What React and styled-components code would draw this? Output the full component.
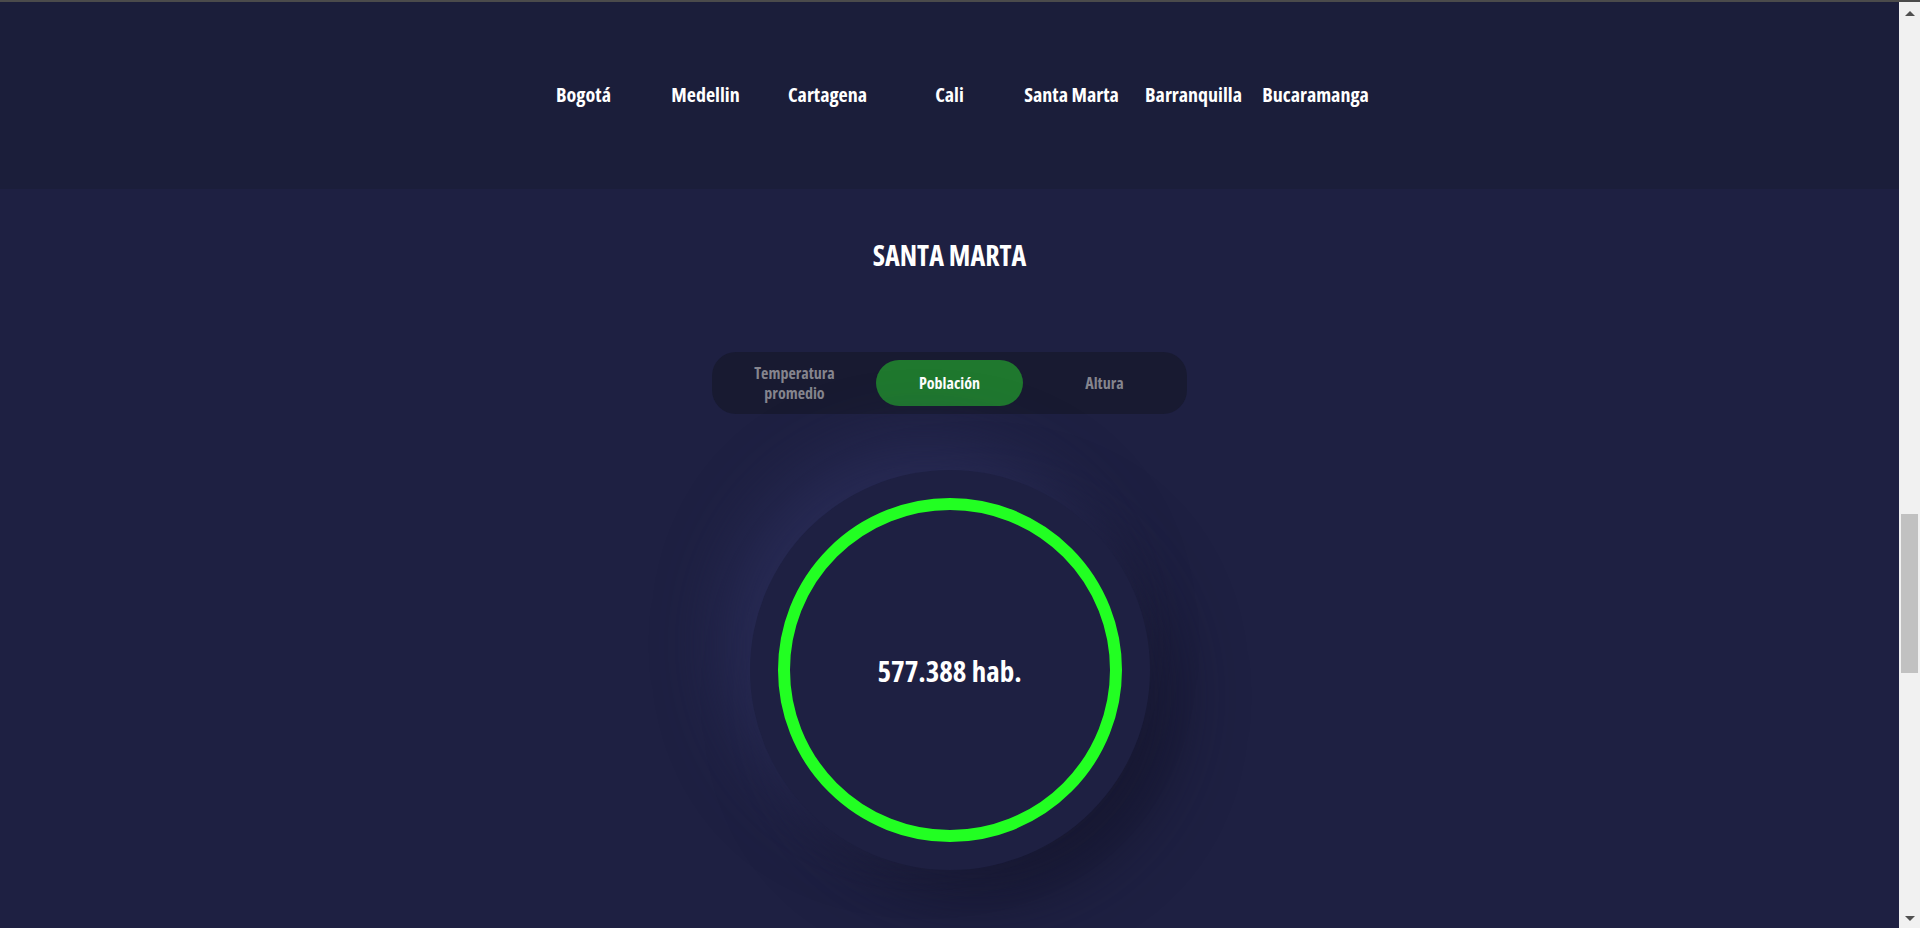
import React, { useState } from 'react'
import styled, { createGlobalStyle } from 'styled-components'

const colors = {
  header: '#1b1e3a',
  section: '#1e2042',
  tabs: '#181a31',
  active: '#1f782e',
  ring: '#22ff22',
  muted: '#85858e',
  white: '#ffffff',
  track: '#f1f1f1',
  thumb: '#c1c1c1',
  arrow: '#505050',
}

const GlobalStyle = createGlobalStyle`
  html, body {
    margin: 0;
    padding: 0;
    height: 100%;
    overflow: hidden;
  }
  body {
    border-top: 2px solid #4b4b4b;
    box-sizing: border-box;
    background: ${colors.section};
    font-family: "Open Sans", "Liberation Sans", sans-serif;
    font-stretch: 75%;
    font-weight: 700;
  }
`

const cities = [
  { name: 'Bogotá', temperatura: '14 °C', poblacion: '7.181.469 hab.', altura: '2.640 m' },
  { name: 'Medellin', temperatura: '22 °C', poblacion: '2.427.129 hab.', altura: '1.495 m' },
  { name: 'Cartagena', temperatura: '28 °C', poblacion: '1.028.736 hab.', altura: '2 m' },
  { name: 'Cali', temperatura: '25 °C', poblacion: '2.227.642 hab.', altura: '1.018 m' },
  { name: 'Santa Marta', temperatura: '28 °C', poblacion: '577.388 hab.', altura: '6 m' },
  { name: 'Barranquilla', temperatura: '28 °C', poblacion: '1.274.250 hab.', altura: '18 m' },
  { name: 'Bucaramanga', temperatura: '23 °C', poblacion: '581.130 hab.', altura: '959 m' },
]

const tabs = [
  { key: 'temperatura', label: 'Temperatura promedio' },
  { key: 'poblacion', label: 'Población' },
  { key: 'altura', label: 'Altura' },
]

const Page = styled.div`
  display: flex;
  height: calc(100vh - 2px);
`

const Main = styled.main`
  flex: 1;
  display: flex;
  flex-direction: column;
  min-width: 0;
`

const Header = styled.header`
  height: 187px;
  flex-shrink: 0;
  background: ${colors.header};
  display: flex;
  align-items: center;
  justify-content: center;
`

const Nav = styled.nav`
  display: flex;
  margin-top: -2px;
`

const NavLink = styled.a`
  width: 122px;
  text-align: center;
  color: ${colors.white};
  font-size: 20px;
  text-decoration: none;
  white-space: nowrap;
  cursor: pointer;
`

const Section = styled.section`
  flex: 1;
  padding-top: 48px;
  background: ${colors.section};
  display: flex;
  flex-direction: column;
  align-items: center;
  overflow: hidden;
`

const Title = styled.h2`
  margin: 0;
  color: ${colors.white};
  font-size: 28px;
  font-weight: 700;
  line-height: 36px;
  text-transform: uppercase;
`

const TabBar = styled.div`
  margin-top: 79px;
  display: flex;
  gap: 8px;
  padding: 8px 9px;
  border-radius: 24px;
  background: ${colors.tabs};
`

const Tab = styled.button`
  width: 147px;
  height: 46px;
  padding: 0 30px;
  border: none;
  border-radius: 23px;
  background: ${({ $active }) => ($active ? colors.active : 'transparent')};
  color: ${({ $active }) => ($active ? colors.white : colors.muted)};
  font-family: inherit;
  font-stretch: 75%;
  font-weight: 700;
  font-size: 16px;
  line-height: 20px;
  cursor: pointer;
`

const Dial = styled.div`
  margin-top: 56px;
  flex-shrink: 0;
  width: 400px;
  height: 400px;
  border-radius: 50%;
  background: ${colors.section};
  box-shadow: -26px -26px 64px rgba(44, 47, 92, 0.7),
    26px 26px 64px rgba(18, 19, 38, 0.7);
  display: flex;
  align-items: center;
  justify-content: center;
`

const Ring = styled.div`
  width: 320px;
  height: 320px;
  border: 12px solid ${colors.ring};
  border-radius: 50%;
  display: flex;
  align-items: center;
  justify-content: center;
`

const Value = styled.span`
  color: ${colors.white};
  font-size: 29px;
`

const Scrollbar = styled.div`
  width: 21px;
  flex-shrink: 0;
  background: ${colors.track};
  display: flex;
  flex-direction: column;
  align-items: center;
`

const Arrow = styled.span`
  width: 0;
  height: 0;
  border-left: 5px solid transparent;
  border-right: 5px solid transparent;
  ${({ $down }) =>
    $down
      ? `
    margin: auto 0 7px;
    border-top: 5px solid ${colors.arrow};
  `
      : `
    margin-top: 9px;
    border-bottom: 5px solid ${colors.arrow};
  `}
`

const Thumb = styled.span`
  width: 17px;
  height: 159px;
  margin-top: 498px;
  background: ${colors.thumb};
`

const App = () => {
  const [current, setCurrent] = useState(4)
  const [tab, setTab] = useState('poblacion')
  const city = cities[current]

  return (
    <>
      <GlobalStyle />
      <Page>
        <Main>
          <Header>
            <Nav>
              {cities.map((c, index) => (
                <NavLink key={c.name} onClick={() => setCurrent(index)}>
                  {c.name}
                </NavLink>
              ))}
            </Nav>
          </Header>
          <Section>
            <Title>{city.name}</Title>
            <TabBar>
              {tabs.map((t) => (
                <Tab key={t.key} $active={tab === t.key} onClick={() => setTab(t.key)}>
                  {t.label}
                </Tab>
              ))}
            </TabBar>
            <Dial>
              <Ring>
                <Value>{city[tab]}</Value>
              </Ring>
            </Dial>
          </Section>
        </Main>
        <Scrollbar>
          <Arrow />
          <Thumb />
          <Arrow $down />
        </Scrollbar>
      </Page>
    </>
  )
}

export default App
